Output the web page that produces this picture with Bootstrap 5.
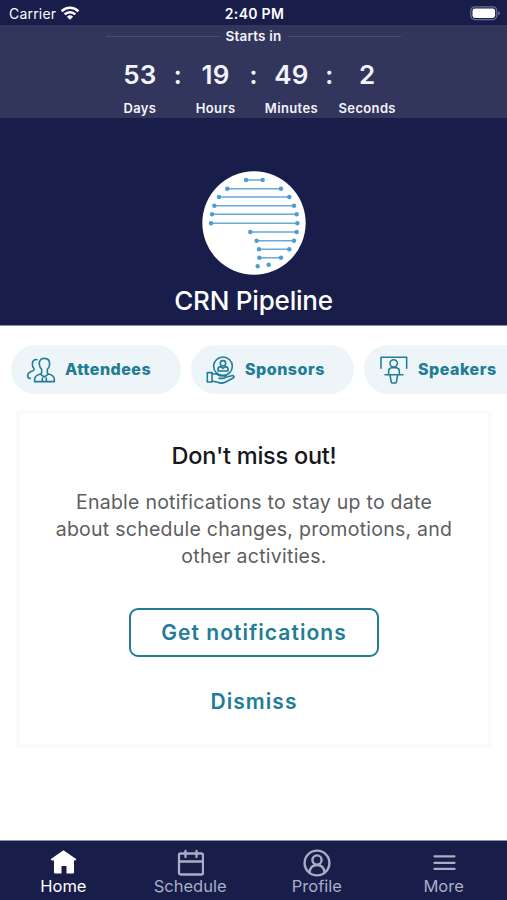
<!DOCTYPE html>
<html lang="en">
<head>
<meta charset="utf-8">
<meta name="viewport" content="width=device-width, initial-scale=1">
<title>CRN Pipeline</title>
<link href="https://cdn.jsdelivr.net/npm/bootstrap@5.3.0/dist/css/bootstrap.min.css" rel="stylesheet">
<style>
  :root { --navy: #181d4a; --teal: #217c96; }
  body { font-family: Inter, "Liberation Sans", sans-serif; color: #16171b; }
  .screen { height: 900px; }
  .navy { background: var(--navy); color: #fff; }
  svg { display: block; flex: none; }
  .status { height: 25px; padding: 2px 7px 0 9px; font-size: 14px; line-height: 24px; }
  .status > div { flex: 1 1 0; }
  .status .clock { font-weight: 600; letter-spacing: .3px; font-size: 14px; }
  .carrier { letter-spacing: .2px; }
  .countdown { height: 93px; background: #33365c; color: #f3f4fb; }
  .starts { width: 295px; height: 22px; font-size: 13.5px; font-weight: 600; letter-spacing: .2px; white-space: nowrap; }
  .starts span { padding: 0 6px; }
  .rule { height: 1px; background: #4a4d70; }
  .units { width: 303.2px; margin-top: 10px; }
  .unit { flex: 1 1 0; min-width: 0; }
  .num { font-size: 26px; font-weight: 600; line-height: 36px; letter-spacing: .2px; }
  .unit-name { font-size: 13px; font-weight: 600; line-height: 18px; margin-top: 6px; letter-spacing: .35px; }
  .colon { width: 12px; margin: 0 -6px; font-size: 25px; font-weight: 600; line-height: 36px; }
  .hero { height: 208px; padding-top: 53px; border-bottom: 1px solid #8e90aa; }
  .hero h1 { font-size: 26px; font-weight: 500; line-height: 32px; letter-spacing: -.2px; margin: 10px 0 0; }
  .chips { padding: 19px 0 0 11px; gap: 10px; }
  .chip { height: 49px; background: #eef5f8; color: var(--teal); border-radius: 25px; padding-left: 15px; flex: none; font-size: 16px; font-weight: 800; letter-spacing: .5px; }
  .chip span { margin: -1px 0 0 9px; }
  .chip svg, .tabs svg { fill: none; stroke: currentColor; stroke-linecap: round; stroke-linejoin: round; }
  .notice { margin: 20px 19px 0 20px; height: 330px; border: 0; border-radius: 0; box-shadow: 0 0 2px 4px #fafafa; color: inherit; padding-top: 25px; }
  .notice h2 { font-size: 23.5px; font-weight: 500; line-height: 34px; letter-spacing: -.25px; margin: 0; }
  .notice p { font-size: 19.5px; line-height: 27px; color: #5d5e61; letter-spacing: .25px; margin: 16px 0 0; }
  .notice .btn { color: var(--teal); font-size: 21px; font-weight: 600; letter-spacing: 1.05px; line-height: 28px; }
  .btn-get { width: 250px; height: 49px; border: 2px solid var(--teal); border-radius: 9px; margin-top: 38px; padding: 1px 0 0; }
  .btn-skip { margin-top: 24px; }
  .tabs { height: 60px; border-top: 1px solid #8e90aa; font-size: 16.5px; line-height: 18px; padding-top: 8px; }
  .tabs a { color: #a9adc6; text-decoration: none; flex: 1 1 0; }
  .tabs a.active { color: #fff; }
</style>
</head>
<body>
<div class="screen d-flex flex-column overflow-hidden bg-white">
  <header>
    <div class="status navy d-flex align-items-center">
      <div class="d-flex align-items-center gap-1">
        <span class="carrier">Carrier</span>
        <svg width="20" height="16" viewBox="0 0 20 16" fill="none" stroke="#fff" stroke-width="2.6"><path d="M1.600 5.200a12 12 0 0 1 16.800 0M4.700 8.400a7.600 7.600 0 0 1 10.600 0"/><path d="M10 13.800 6.900 10.700a4.500 4.500 0 0 1 6.200 0z" fill="#fff" stroke="none"/></svg>
      </div>
      <div class="clock text-center">2:40 PM</div>
      <div class="d-flex justify-content-end">
        <svg width="30" height="15" viewBox="0 0 30 15"><rect x=".8" y=".8" width="26" height="12.800" rx="4" fill="none" stroke="#6e7195" stroke-width="1.200"/><rect x="2.500" y="2.500" width="22.600" height="9.400" rx="2.300" fill="#fff"/><path d="M28.200 5v4.400q1.700-.8 1.700-2.200t-1.700-2.200z" fill="#6e7195"/></svg>
      </div>
    </div>
    <section class="countdown d-flex flex-column align-items-center">
      <div class="starts d-flex align-items-center">
        <div class="rule flex-grow-1"></div><span>Starts in</span><div class="rule flex-grow-1"></div>
      </div>
      <div class="units d-flex text-center">
        <div class="unit"><div class="num">53</div><div class="unit-name">Days</div></div>
        <div class="colon">:</div>
        <div class="unit"><div class="num">19</div><div class="unit-name">Hours</div></div>
        <div class="colon">:</div>
        <div class="unit"><div class="num">49</div><div class="unit-name">Minutes</div></div>
        <div class="colon">:</div>
        <div class="unit"><div class="num">2</div><div class="unit-name">Seconds</div></div>
      </div>
    </section>
    <section class="hero navy d-flex flex-column align-items-center">
      <svg width="104" height="104" viewBox="125 33 312 312">
        <circle cx="281" cy="189" r="155" fill="#fff"/>
        <path d="M257 60H307M201 86H362M176 111H387M162 137H401M155 163H409M152 190H411M270 216H409M289 242H401M296 268H387M297 293H362" stroke="#67a9d7" stroke-width="4.5"/>
        <path d="M257 60h0M307 60h0M201 86h0M362 86h0M176 111h0M387 111h0M162 137h0M401 137h0M155 163h0M409 163h0M152 190h0M411 190h0M270 216h0M409 216h0M289 242h0M401 242h0M296 268h0M387 268h0M297 293h0M362 293h0M292 319h0M325 314h0" stroke="#4b9fd2" stroke-width="13.5" stroke-linecap="round"/>
      </svg>
      <h1>CRN Pipeline</h1>
    </section>
  </header>

  <nav class="chips d-flex overflow-hidden">
    <div class="chip d-flex align-items-center" style="width:170px">
      <svg width="30" height="28" viewBox="77 62 90 84" stroke-width="4.800"><path d="M132 69c-11 0-16 8-15 17 0 7 3 12 7 16v10q0 3-4 4c-11 3-17 7-17 16v7h59v-7c0-9-6-13-17-16q-4-1-4-4v-10c4-4 7-9 7-16 0-9-5-17-16-17zM122 118l10 7 10-7M126 128v10M138 128v10"/><path d="M110 73c-9-2-14 5-14 13 0 5 1 9 4 12 3 4 1 7-4 9-9 3-14 7-14 14 0 5 3 8 8 8"/></svg>
      <span>Attendees</span>
    </div>
    <div class="chip d-flex align-items-center" style="width:163px">
      <svg width="30" height="28" viewBox="617 62 90 84" stroke-width="4.800"><circle cx="668" cy="93" r="28"/><circle cx="668" cy="84" r="8"/><path d="M653 107v-5q0-7 8-8l7 5 7-5q8 1 8 8v5zM621 112h14v28h-14zM635 117c9-4 16-1 22 4h13c6 0 6 8 0 8h-14M676 126l18-5c8-1 9 5 3 8l-21 11c-8 4-17 4-24 1l-17-4"/></svg>
      <span>Sponsors</span>
    </div>
    <div class="chip d-flex align-items-center" style="width:170px">
      <svg width="30" height="28" viewBox="376 62 90 84" stroke-width="4.600"><path d="M382 99V66h77v33M394 118h54M409 119l4 22q1 2 3 2h9q2 0 3-2l4-22M405 115v-9q0-8 9-9h14q9 1 9 9v9"/><circle cx="420" cy="84" r="11"/></svg>
      <span>Speakers</span>
    </div>
  </nav>

  <main class="card notice text-center align-items-center">
    <h2>Don't miss out!</h2>
    <p>Enable notifications to stay up to date<br>about schedule changes, promotions, and<br>other activities.</p>
    <button class="btn btn-get">Get notifications</button>
    <button class="btn btn-skip">Dismiss</button>
  </main>

  <nav class="tabs navy d-flex mt-auto text-center">
    <a href="#" class="active d-flex flex-column align-items-center">
      <svg width="28" height="28" viewBox="-1 1 28 28"><path d="M13.500 2.200 26.500 11.200 25 12.500H24v12q0 1-1 1H16.500v-7.500h-5V25.500H5q-1 0-1-1V12.500H2L.5 11.200z" fill="#fff" stroke="none"/></svg>Home</a>
    <a href="#" class="d-flex flex-column align-items-center">
      <svg width="28" height="28" viewBox="0 0 28 28" stroke-width="2.300"><rect x="3" y="4.500" width="24" height="21" rx="1.500"/><path d="M3 12.500h24M9.500 2v6M20.500 2v6"/></svg>Schedule</a>
    <a href="#" class="d-flex flex-column align-items-center">
      <svg width="28" height="28" viewBox="0 0 28 28" stroke-width="2.400"><circle cx="14" cy="14" r="12.400"/><circle cx="14" cy="11" r="4.600"/><path d="M6.500 23.500c.5-5 3-7.500 7.500-7.500s7 2.500 7.500 7.500"/></svg>Profile</a>
    <a href="#" class="d-flex flex-column align-items-center">
      <svg width="28" height="28" viewBox="0 0 28 28" stroke-width="2.300"><path d="M4.500 7.300h20M4.500 13.800h20M4.500 19.900h20"/></svg>More</a>
  </nav>
</div>
<script src="https://cdn.jsdelivr.net/npm/bootstrap@5.3.0/dist/js/bootstrap.bundle.min.js"></script>
</body>
</html>
